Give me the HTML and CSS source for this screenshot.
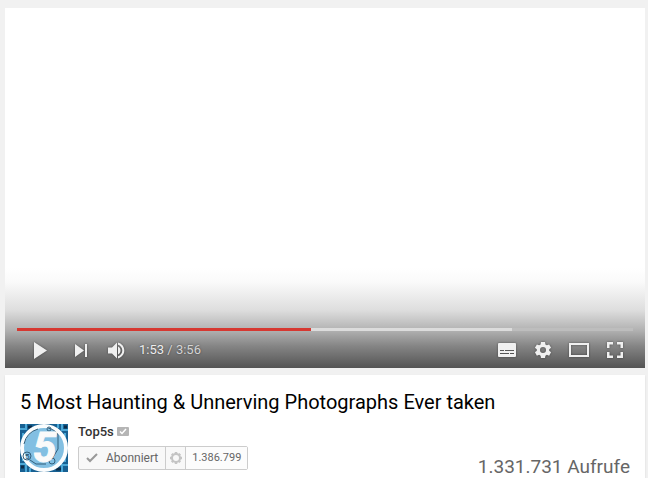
FILE: index.html
```html
<!DOCTYPE html>
<html lang="de">
<head>
<meta charset="utf-8">
<title>5 Most Haunting &amp; Unnerving Photographs Ever taken</title>
<link rel="stylesheet" href="styles.css">
</head>
<body>
<main class="page">
  <section class="player">
    <div class="chrome">
      <div class="progress"><div class="loaded"></div><div class="played"></div></div>
      <div class="controls">
        <button class="play" aria-label="Wiedergabe"><svg width="36" height="36" viewBox="0 0 36 36"><path d="M11 10v17l13-8.500z"/></svg></button>
        <button class="next" aria-label="Weiter"><svg width="36" height="36" viewBox="0 0 36 36"><path d="M12 12v13l9-6.500zM22 12h2v13h-2z"/></svg></button>
        <button class="volume" aria-label="Ton"><svg width="36" height="36" viewBox="0 0 36 36"><path d="M9 15.500v6h4l5 5v-16l-5 5zM19 14.500v8c1.500-.7 2.500-2.200 2.500-4s-1-3.300-2.500-4zM19 10.600v2.100c2.500.8 4.300 3.100 4.300 5.800s-1.800 5-4.300 5.800v2.100c3.600-.9 6.300-4.100 6.300-7.900s-2.700-7-6.300-7.900z"/></svg></button>
        <div class="time"><span class="current">1:53</span> / 3:56</div>
        <div class="right">
          <button aria-label="Untertitel"><svg width="36" height="36" viewBox="0 0 36 36"><path fill-rule="evenodd" d="M10 11h16q1 0 1 1v12q0 1-1 1H10q-1 0-1-1V12q0-1 1-1zM11 18v1h4v-1zM16 18v1h9v-1zM11 21v1h9v-1zM21 21v1h4v-1z"/></svg></button>
          <button aria-label="Einstellungen"><svg width="36" height="36" viewBox="0 0 36 36"><path fill-rule="evenodd" d="M16 10h4l.4 2.400 1.500.9 2.200-.9 2 3.400-1.900 1.500v1.500l1.900 1.500-2 3.400-2.200-.9-1.500.9-.4 2.300h-4l-.4-2.300-1.500-.9-2.200.9-2-3.400 1.900-1.500v-1.500l-1.900-1.500 2-3.400 2.200.9 1.500-.9zM18 15a3 3 0 1 0 0 6 3 3 0 0 0 0-6z"/></svg></button>
          <button aria-label="Kinomodus"><svg width="36" height="36" viewBox="0 0 36 36"><path fill-rule="evenodd" d="M8 11h20v14H8zM10 13v10h16V13z"/></svg></button>
          <button aria-label="Vollbild"><svg width="36" height="36" viewBox="0 0 36 36"><path d="M10 10h6v2.500h-3.500v3.500h-2.500zM20 10h6v6h-2.500v-3.500h-3.500zM10 20h2.500v3.500h3.500v2.500h-6zM23.500 20h2.500v6h-6v-2.500h3.500z"/></svg></button>
        </div>
      </div>
    </div>
  </section>
  <section class="card">
    <h1>5 Most Haunting &amp; Unnerving Photographs Ever taken</h1>
    <div class="details">
      <a class="avatar" href="#" aria-label="Top5s">
        <svg width="48" height="48" viewBox="0 0 48 48">
          <rect width="48" height="48" fill="#176092"/>
          <path d="M0 5h6V0M42 0v6h6M0 40h6v8M42 48v-7h6M38 0v4M10 48v-4M3 9v5M45 9v5M45 34v4M3 32v5" fill="none" stroke="#4aa7d6" stroke-width="2"/>
          <path d="M8 3h4M36 45h5M1 43h3M44 3h3" stroke="#0b2c49" stroke-width="3"/>
          <circle cx="24" cy="24" r="22" fill="#82bfe2" stroke="#fbfdfe" stroke-width="4"/>
          <path d="M4 20A20 20 0 0 1 18 5M28 4q8 2 10 7v14l-6 10M10 36l6 4h10" fill="none" stroke="#315f7b" stroke-width="1"/>
          <circle cx="7" cy="32" r="4" class="ring"/><circle cx="32" cy="37" r="3" class="ring"/><circle cx="29" cy="5" r="2" class="ring"/>
          <text x="5" y="35" class="tiny">5</text>
          <text x="13" y="38" class="five">5</text>
        </svg>
      </a>
      <div class="channel">
        <div class="name"><a href="#">Top5s</a><svg width="12" height="9" viewBox="0 0 12 9"><rect width="12" height="9" rx="1" fill="#b5b5b5"/><path d="M3 4.500l2 2L9 2" fill="none" stroke="#fff" stroke-width="1.500"/></svg></div>
        <div class="subscribe">
          <button class="subscribed"><svg width="12" height="10" viewBox="0 0 12 10"><path d="M1 5l3 3 7-7" fill="none" stroke="#999" stroke-width="2"/></svg>Abonniert</button>
          <button class="gear" aria-label="Benachrichtigungen"><svg width="14" height="14" viewBox="0 0 14 14"><circle cx="7" cy="7" r="4" fill="none" stroke="#c4c4c4" stroke-width="2"/><path d="M7 1v2M7 11v2M1 7h2M11 7h2M2.800 2.800l1.400 1.400M9.800 9.800l1.400 1.400M2.800 11.200l1.400-1.400M9.800 4.200l1.400-1.400" stroke="#c4c4c4" stroke-width="2.500"/></svg></button>
          <span class="count">1.386.799</span>
        </div>
      </div>
      <div class="views">1.331.731 Aufrufe</div>
    </div>
  </section>
</main>
</body>
</html>
```
FILE: styles.css
```css
* { box-sizing: border-box; }
html { background: #f1f1f1; }
body {
  margin: 0;
  min-height: 100vh;
  border-right: 1px solid #fff;
  font-family: Roboto, "Liberation Sans", sans-serif;
  overflow: hidden;
}
.page {
  display: flex;
  flex-direction: column;
  gap: 7px;
  padding: 8px 3px 0 5px;
}
.player {
  display: flex;
  align-items: flex-end;
  aspect-ratio: 16 / 9;
  background: #fff;
}
.chrome {
  flex: 1;
  padding: 60px 12px 0;
  background: linear-gradient(#fff 0, #fafafa 14px, #dedede 42px, #b2b2b2 62px, #858585 78px, #545454 100%);
}
.progress {
  display: grid;
  height: 3px;
  background: #bdbdbd;
}
.loaded, .played { grid-area: 1 / 1; }
.loaded { width: 80.300%; background: #dcdcdc; }
.played { width: 47.800%; background: #d63831; }
.controls {
  display: flex;
  align-items: center;
  height: 37px;
}
button {
  margin: 0;
  padding: 0;
  border: 0;
  background: none;
  font: inherit;
  cursor: pointer;
}
.controls button { height: 36px; }
.controls svg {
  display: block;
  fill: #f0f0f0;
  filter: drop-shadow(0 0 1px rgba(0, 0, 0, .4));
}
.play { margin-left: 6px; }
.next { margin-left: 4px; }
.time {
  margin-left: 4px;
  color: #d5d5d5;
  font-size: 13px;
  text-shadow: 0 0 2px rgba(0, 0, 0, .5);
}
.current { color: #eee; }
.right { display: flex; margin-left: auto; }
.card {
  padding: 15px 15px 16px;
  background: #fff;
  box-shadow: 0 1px 2px rgba(0, 0, 0, .1);
}
h1 {
  margin: 0 0 10px;
  color: #000;
  font-size: 20px;
  font-weight: 400;
  line-height: 24px;
}
.details { display: flex; }
.avatar { height: 48px; margin-right: 10px; }
.avatar svg { display: block; overflow: visible; }
.ring { fill: none; stroke: #315f7b; }
.tiny { fill: #244d68; font: 8px Roboto, sans-serif; }
.five {
  fill: #fafafa;
  stroke: #fafafa;
  stroke-width: 1px;
  font: italic 700 42px Roboto, sans-serif;
}
.name {
  display: flex;
  align-items: center;
  gap: 3px;
  height: 15px;
  margin-bottom: 7px;
  font-size: 13px;
  font-weight: 500;
}
.name a { color: #333; text-decoration: none; }
.subscribe {
  display: flex;
  height: 24px;
  border: 1px solid #ccc;
  border-radius: 2px;
  background: #f8f8f8;
  color: #666;
  font-size: 12px;
}
.subscribed {
  display: flex;
  align-items: center;
  gap: 8px;
  padding: 0 7px;
  color: #666;
}
.gear {
  display: flex;
  align-items: center;
  justify-content: center;
  width: 21px;
  border: solid #ccc;
  border-width: 0 1px;
}
.count {
  padding: 0 6px;
  background: #fcfcfc;
  font-size: 11px;
  line-height: 22px;
}
.views {
  margin-left: auto;
  padding-top: 31px;
  color: #666;
  font-size: 19px;
  line-height: 24px;
}
```
